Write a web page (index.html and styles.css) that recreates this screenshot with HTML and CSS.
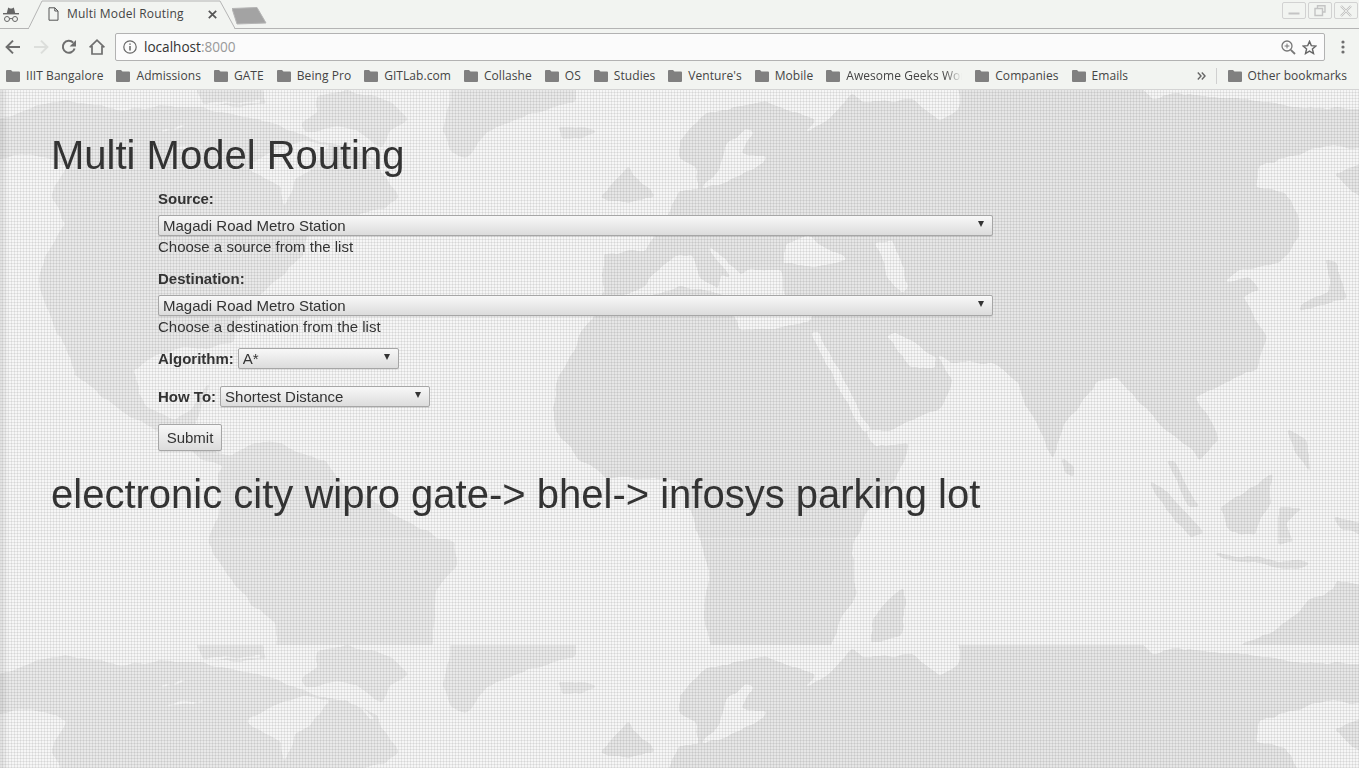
FILE: index.html
```html
<!DOCTYPE html>
<html lang="en">
<head>
<meta charset="UTF-8" />
<title>Multi Model Routing</title>
<link rel="stylesheet" href="styles.css">
</head>
<body>
  <header class="chrome">
    <div class="tabstrip">
      <svg class="incognito" width="16" height="18" viewBox="0 0 16 18">
        <path d="M3.8 8 L5.2 2.5 L7 3.4 L9 3.4 L10.8 2.5 L12.2 8 Z" fill="#666"/>
        <rect x="0" y="8" width="16" height="1.4" fill="#666"/>
        <circle cx="4" cy="14" r="2.5" fill="none" stroke="#666" stroke-width="1"/>
        <circle cx="12" cy="14" r="2.5" fill="none" stroke="#666" stroke-width="1"/>
        <path d="M6.5 13.6 H9.5" stroke="#666" stroke-width="1"/>
      </svg>
      <div class="tab">
        <svg class="tab-shape" width="210" height="29" viewBox="0 0 210 29">
          <path d="M0 28.5 H0.5 L14 1 H192 L207 28.5 H210" fill="#f2f4f1" stroke="#b4b4b4" stroke-width="1"/>
          <path d="M1 28.5 H206" stroke="#f2f4f1" stroke-width="2"/>
        </svg>
        <svg class="tab-file" width="11" height="14" viewBox="0 0 11 14">
          <path d="M1 .8 H6.8 L10 4 V13.2 H1 Z M6.8 .8 V4 H10" fill="none" stroke="#555" stroke-width="1"/>
        </svg>
        <span class="tab-title">Multi Model Routing</span>
        <svg class="tab-close" width="9" height="9" viewBox="0 0 9 9">
          <path d="M.8 .8 L8.2 8.2 M8.2 .8 L.8 8.2" stroke="#555" stroke-width="1.7"/>
        </svg>
      </div>
      <svg class="newtab" width="35" height="18" viewBox="0 0 35 18">
        <path d="M0 1.5 L25 .5 L34 16 L5 17 Z" fill="#a3a3a3" stroke="#b5b5b5" stroke-linejoin="round"/>
      </svg>
      <div class="win-buttons">
        <span class="win-btn">
          <svg width="12" height="12" viewBox="0 0 12 12"><path d="M.5 8.5 H11.5" stroke="#c4c4c4" stroke-width="2"/></svg>
        </span>
        <span class="win-btn">
          <svg width="12" height="12" viewBox="0 0 12 12"><path d="M3.5 3 V.8 H11 V7 H8.5 M1 3.5 H8.5 V10.5 H1 Z" fill="none" stroke="#c4c4c4" stroke-width="1.4"/></svg>
        </span>
        <span class="win-btn">
          <svg width="12" height="12" viewBox="0 0 12 12"><path d="M1 1 L11 11 M11 1 L1 11" stroke="#c4c4c4" stroke-width="2.4"/><path d="M1 1 L11 11 M11 1 L1 11" stroke="#f2f4f1" stroke-width=".8"/></svg>
        </span>
      </div>
    </div>

    <div class="toolbar">
      <svg class="nav-icon" width="16" height="16" viewBox="0 0 16 16"><path d="M15 8 H2 M8 1.6 L1.6 8 L8 14.4" fill="none" stroke="#6e6e6e" stroke-width="2"/></svg>
      <svg class="nav-icon" width="16" height="16" viewBox="0 0 16 16"><path d="M1 8 H14 M8 1.6 L14.4 8 L8 14.4" fill="none" stroke="#dcdedb" stroke-width="2"/></svg>
      <svg class="nav-icon" width="16" height="16" viewBox="0 0 16 16"><path d="M13.6 9.5 A6 6 0 1 1 12.2 3.6" fill="none" stroke="#6e6e6e" stroke-width="2"/><path d="M15 1 V7.4 H8.6 Z" fill="#6e6e6e"/></svg>
      <svg class="nav-icon nav-home" width="16" height="16" viewBox="0 0 16 16"><path d="M.6 8.4 L8 1.2 L15.4 8.4 M3 7 V15 H13 V7" fill="none" stroke="#6e6e6e" stroke-width="1.7"/></svg>
      <div class="omnibox">
        <svg class="info" width="14" height="14" viewBox="0 0 14 14">
          <circle cx="7" cy="7" r="6.2" fill="none" stroke="#666" stroke-width="1.2"/>
          <path d="M7 6 V10.6 M7 3.4 V4.8" stroke="#666" stroke-width="1.5"/>
        </svg>
        <span class="url">localhost<span class="url-port">:8000</span></span>
        <svg class="zoom-icon" width="15" height="15" viewBox="0 0 15 15">
          <circle cx="6" cy="6" r="5" fill="none" stroke="#777" stroke-width="1.3"/>
          <path d="M9.8 9.8 L14 14" stroke="#777" stroke-width="1.8"/>
          <path d="M3.6 6 H8.4 M6 3.6 V8.4" stroke="#777" stroke-width="1"/>
        </svg>
        <svg class="star" width="15" height="15" viewBox="0 0 15 15">
          <path d="M7.5 1.4 L9.3 5.6 L13.9 6 L10.4 9 L11.5 13.5 L7.5 11.1 L3.5 13.5 L4.6 9 L1.1 6 L5.7 5.6 Z" fill="none" stroke="#666" stroke-width="1.4"/>
        </svg>
      </div>
      <svg class="menu-dots" width="4" height="14" viewBox="0 0 4 14">
        <circle cx="2" cy="2" r="1.6" fill="#6e6e6e"/>
        <circle cx="2" cy="7" r="1.6" fill="#6e6e6e"/>
        <circle cx="2" cy="12" r="1.6" fill="#6e6e6e"/>
      </svg>
    </div>

    <nav class="bookmarks">
      <svg class="icon-defs" width="0" height="0">
        <symbol id="folder" viewBox="0 0 14 12">
          <path d="M0 1 Q0 0 1 0 H5 L6.5 1.6 H13 Q14 1.6 14 2.6 V11 Q14 12 13 12 H1 Q0 12 0 11 Z" fill="#808080"/>
        </symbol>
      </svg>
      <a class="bookmark"><svg class="folder"><use href="#folder"/></svg>IIIT Bangalore</a>
      <a class="bookmark"><svg class="folder"><use href="#folder"/></svg>Admissions</a>
      <a class="bookmark"><svg class="folder"><use href="#folder"/></svg>GATE</a>
      <a class="bookmark"><svg class="folder"><use href="#folder"/></svg>Being Pro</a>
      <a class="bookmark"><svg class="folder"><use href="#folder"/></svg>GITLab.com</a>
      <a class="bookmark"><svg class="folder"><use href="#folder"/></svg>Collashe</a>
      <a class="bookmark"><svg class="folder"><use href="#folder"/></svg>OS</a>
      <a class="bookmark"><svg class="folder"><use href="#folder"/></svg>Studies</a>
      <a class="bookmark"><svg class="folder"><use href="#folder"/></svg>Venture's</a>
      <a class="bookmark"><svg class="folder"><use href="#folder"/></svg>Mobile</a>
      <a class="bookmark"><svg class="folder"><use href="#folder"/></svg><span class="fade">Awesome Geeks World</span></a>
      <a class="bookmark"><svg class="folder"><use href="#folder"/></svg>Companies</a>
      <a class="bookmark"><svg class="folder"><use href="#folder"/></svg>Emails</a>
      <svg class="more" width="9" height="8" viewBox="0 0 9 8">
        <path d="M.8 .6 L4 4 L.8 7.4 M4.8 .6 L8 4 L4.8 7.4" fill="none" stroke="#666" stroke-width="1.4"/>
      </svg>
      <span class="bm-sep"></span>
      <a class="bookmark"><svg class="folder"><use href="#folder"/></svg>Other bookmarks</a>
    </nav>
  </header>

  <div class="viewport">
    <svg class="map" width="1359" height="678" viewBox="0 0 1359 678">
      <defs>
        <pattern id="weave" width="3" height="3" patternUnits="userSpaceOnUse">
          <rect x="2" width="1" height="3" fill="#000" opacity=".065"/>
          <rect y="2" width="3" height="1" fill="#000" opacity=".065"/>
        </pattern>
        <linearGradient id="edge" x1="0" x2="1" y1="0" y2="0">
          <stop offset="0" stop-color="#000" stop-opacity=".09"/>
          <stop offset="1" stop-color="#000" stop-opacity="0"/>
        </linearGradient>
        <!-- roughens the hand traced outlines into something like a coast -->
        <filter id="coast" filterUnits="userSpaceOnUse" x="-20" y="-40" width="1400" height="660">
          <feTurbulence type="fractalNoise" baseFrequency=".045" numOctaves="3" seed="4" result="noise"/>
          <feDisplacementMap in="SourceGraphic" in2="noise" scale="7" xChannelSelector="R" yChannelSelector="G"/>
          <feGaussianBlur stdDeviation="1.4"/>
          <feComponentTransfer>
            <feFuncA type="linear" slope="7" intercept="-3"/>
          </feComponentTransfer>
        </filter>
        <clipPath id="tile-clip">
          <rect width="1359" height="555"/>
        </clipPath>
        <g id="tile" clip-path="url(#tile-clip)">
          <g class="land land-west" filter="url(#coast)">
            <!-- Americas and the north atlantic islands -->
            <g transform="scale(.4337 .3333)">
              <path d="M-40 105 L20 80 L80 50 L150 30 L220 45 L290 62 L370 45 L470 55 L560 80 L650 110 L720 150 L800 165 L870 215 L900 290 L918 320 L890 350 L800 385 L710 430 L695 500 L660 540 L620 590 L575 650 L545 700 L540 760 L480 770 L400 780 L350 800 L310 840 L320 900 L340 950 L400 990 L440 960 L470 900 L490 870 L470 930 L450 1000 L500 1090 L530 1100 L560 1080 L520 1130 L470 1110 L400 1040 L300 985 L220 900 L170 850 L120 700 L85 570 L110 490 L150 400 L120 320 L140 260 L150 230 L130 215 L70 190 L-40 215 Z"/>
              <path d="M440 -40 L600 -40 L610 40 L540 50 L470 45 Z"/>
              <path d="M730 20 L800 5 L900 30 L945 95 L900 120 L880 170 L820 120 L760 110 L700 130 L690 100 L730 70 Z"/>
              <path d="M1022 120 L1045 -40 L1330 -40 L1325 40 L1260 55 L1180 90 L1120 130 L1075 205 L1040 185 Z"/>
              <path d="M1285 115 L1340 105 L1380 120 L1340 150 L1295 140 Z"/>
            </g>
            <g transform="translate(0 340) scale(.4337 .3333)">
              <path d="M550 60 L620 30 L750 90 L780 150 L940 280 L1050 340 L1055 400 L1005 480 L1000 620 L990 705 L640 705 L635 580 L540 470 L500 380 L480 330 L510 230 L500 130 Z"/>
            </g>
          </g>
          <g class="land" filter="url(#coast)">
            <!-- Europe, Asia and Africa -->
            <path transform="scale(.4337 .3333)" d="M1385 320 L1420 270 L1450 220 L1480 280 L1510 320 L1450 340 Z"/>
            <path d="M603 163 L645 160 L665 130 L680 100 L700 100 L695 77 L680 70 L680 50 L706 23 L767 12 L815 30 L800 45 L835 25 L853 2 L862 13 L910 10 L940 30 L958 20 L958 -20 L1130 -20 L1152 10 L1178 3 L1256 12 L1304 17 L1380 20 L1380 60 L1335 57 L1310 60 L1260 75 L1256 97 L1286 103 L1300 123 L1300 147 L1278 173 L1240 180 L1225 192 L1250 187 L1262 200 L1243 207 L1267 247 L1256 280 L1208 300 L1195 307 L1215 337 L1217 347 L1200 370 L1191 360 L1165 340 L1117 287 L1096 293 L1065 333 L1052 370 L1039 340 L1026 317 L1018 293 L992 273 L953 273 L935 263 L953 290 L940 317 L888 340 L866 340 L875 357 L909 353 L896 390 L866 423 L858 443 L851 452 L853 483 L855 507 L836 537 L825 580 L715 580 L704 523 L710 480 L699 447 L693 427 L680 390 L607 387 L577 367 L555 340 L555 300 L559 287 L577 250 L600 217 L603 200 Z"/>
            <path d="M1334 83 L1380 67 L1380 107 L1359 107 Z"/>
            <path d="M1165 370 L1175 372 L1200 417 L1190 417 Z"/>
            <path d="M903 497 L907 510 L901 547 L870 553 L873 527 L888 510 Z"/>
            <path d="M1061 365 L1074 377 L1072 388 L1065 383 Z"/>
            <path d="M1148 390 L1169 403 L1204 443 L1191 447 L1165 420 Z"/>
            <path d="M1221 417 L1273 383 L1269 413 L1256 447 L1226 440 Z"/>
            <path d="M1204 462 L1247 467 L1312 473 L1295 480 L1243 473 Z"/>
            <path d="M1278 417 L1304 417 L1286 433 L1293 453 L1278 455 Z"/>
            <path d="M1286 340 L1308 350 L1310 383 L1295 360 Z"/>
            <path d="M1334 427 L1380 437 L1380 447 L1342 440 Z"/>
            <path d="M1243 553 L1278 540 L1308 510 L1330 500 L1338 490 L1380 500 L1380 580 L1230 580 Z"/>
            <path d="M1299 223 L1334 210 L1347 207 L1338 173 L1325 170 L1330 200 L1304 213 Z"/>
          </g>
          <g class="sea" filter="url(#coast)">
            <path transform="scale(.4337 .3333)" d="M570 225 L620 190 L700 155 L760 165 L710 240 L680 270 L655 355 L645 290 L590 250 Z"/>
            <path transform="scale(.4337 .3333)" d="M120 740 L135 730 L175 850 L160 850 Z"/>
            <!-- channels between the arctic islands -->
            <g class="channels" transform="scale(.4337 .3333)">
              <path d="M370 125 L430 105"/>
              <path d="M480 45 L600 35"/>
              <path d="M380 185 L470 165"/>
              <path d="M640 55 L720 5"/>
              <path d="M700 135 L780 115"/>
              <path d="M820 175 L860 225"/>
            </g>
            <path d="M600 212 L640 200 L660 178 L680 163 L693 165 L700 190 L720 198 L722 185 L735 187 L750 180 L782 180 L784 207 L819 207 L810 233 L788 237 L741 240 L723 203 L680 197 L624 213 Z"/>
            <path d="M706 153 L740 183 L735 190 L712 165 Z"/>
            <path d="M784 153 L806 147 L847 170 L814 177 L784 173 Z"/>
            <path d="M875 153 L892 150 L909 197 L901 203 L888 187 Z"/>
            <path d="M810 243 L819 243 L870 340 L862 340 Z"/>
            <path d="M888 245 L897 243 L935 267 L935 277 L910 277 Z"/>
            <path d="M723 67 L728 53 L745 40 L754 42 L741 63 L767 68 L754 80 L736 87 L710 97 L702 100 L718 80 Z"/>
            <path d="M680 75 L695 80 L700 97 L680 100 Z"/>
          </g>
        </g>
      </defs>
      <rect class="sea" width="1359" height="678"/>
      <use href="#tile"/>
      <use href="#tile" y="555"/>
      <rect y="448" width="1359" height="1" fill="#fff" opacity=".35"/>
      <rect width="1359" height="678" fill="url(#weave)"/>
      <rect width="9" height="678" fill="url(#edge)"/>
    </svg>

    <main class="page">
      <h1>Multi Model Routing</h1>
      <form class="route-form">
        <div class="form-group">
          <label for="source">Source:</label>
          <div class="select-wrap">
            <select id="source" class="select-full"><option>Magadi Road Metro Station</option></select>
          </div>
          <div class="help">Choose a source from the list</div>
        </div>
        <div class="form-group">
          <label for="destination">Destination:</label>
          <div class="select-wrap">
            <select id="destination" class="select-full"><option>Magadi Road Metro Station</option></select>
          </div>
          <div class="help">Choose a destination from the list</div>
        </div>
        <div class="form-row">
          <label for="algorithm">Algorithm:</label>
          <div class="select-wrap">
            <select id="algorithm" class="select-algo"><option>A*</option></select>
          </div>
        </div>
        <div class="form-row">
          <label for="howto">How To:</label>
          <div class="select-wrap">
            <select id="howto" class="select-howto"><option>Shortest Distance</option></select>
          </div>
        </div>
        <button type="button" class="btn-submit">Submit</button>
      </form>
      <h1 class="result">electronic city wipro gate-&gt; bhel-&gt; infosys parking lot</h1>
    </main>
  </div>
</body>
</html>
```

FILE: styles.css
```css
* {
  box-sizing: border-box;
}

html, body {
  height: 768px;
  overflow: hidden;
}

body {
  margin: 0;
  font-family: "Liberation Sans", Arial, sans-serif;
  font-size: 15px;
  line-height: 22px;
  color: #333;
  background: #f1f1f1;
}

/* Browser chrome */
.chrome {
  height: 90px;
  background: #f2f4f1;
  border-bottom: 1px solid #d4d4d4;
  font-family: "Open Sans", sans-serif;
  color: #444;
}

.tabstrip {
  height: 29px;
  display: flex;
  align-items: flex-start;
  border-bottom: 1px solid #b4b4b4;
  padding-left: 3px;
}

.incognito {
  margin-top: 5px;
  flex: none;
}

.tab {
  position: relative;
  width: 210px;
  height: 29px;
  margin-left: 9px;
  flex: none;
  display: flex;
  align-items: center;
  padding: 0 0 1px 20px;
}

.tab-shape {
  position: absolute;
  left: 0;
  top: 0;
}

.tab-file, .tab-title, .tab-close {
  position: relative;
}

.tab-title {
  margin-left: 8px;
  font-size: 12px;
  letter-spacing: .2px;
  white-space: nowrap;
}

.tab-close {
  margin-left: 24px;
}

.newtab {
  margin: 7px 0 0 -6px;
  flex: none;
}

.win-buttons {
  margin: 2px 1px 0 auto;
  display: flex;
  gap: 2px;
}

.win-btn {
  width: 24px;
  height: 17px;
  border: 1px solid #d2d2d2;
  border-radius: 2px;
  display: flex;
  align-items: center;
  justify-content: center;
}

.toolbar {
  height: 33px;
  display: flex;
  align-items: center;
  padding: 3px 0 0 5px;
}

.nav-icon {
  flex: none;
  margin-right: 12px;
}

.nav-home {
  margin-right: 10px;
}

.omnibox {
  width: 1210px;
  height: 28px;
  flex: none;
  display: flex;
  align-items: center;
  padding: 0 7px;
  background: #fbfbfb;
  border: 1px solid #b2b2b2;
  border-radius: 2px;
}

.url {
  margin-left: 7px;
  font-size: 13.6px;
  color: #333;
}

.url-port {
  color: #999;
}

.zoom-icon {
  margin-left: auto;
}

.star {
  margin-left: 6px;
}

.menu-dots {
  margin-left: 16px;
  flex: none;
}

.bookmarks {
  height: 27px;
  display: flex;
  align-items: center;
  gap: 13px;
  padding: 0 12px 0 6px;
  font-size: 12px;
  letter-spacing: .06px;
  white-space: nowrap;
}

.icon-defs {
  position: absolute;
}

.bookmark {
  display: flex;
  align-items: center;
  gap: 6px;
}

.folder {
  width: 14px;
  height: 12px;
  flex: none;
}

.fade {
  display: block;
  width: 116px;
  overflow: hidden;
  -webkit-mask-image: linear-gradient(to right, #000 85%, transparent);
  mask-image: linear-gradient(to right, #000 85%, transparent);
}

.more {
  margin-left: auto;
}

.bm-sep {
  width: 1px;
  height: 16px;
  margin: 0 -2px 0 -3px;
  background: #d0d0d0;
}

/* Page */
.viewport {
  position: relative;
  height: 678px;
  overflow: hidden;
}

.map {
  position: absolute;
  left: 0;
  top: 0;
  display: block;
}

.land {
  fill: #e6e6e6;
}

.land-west {
  fill: #e9e9e9;
}

.sea {
  fill: #f6f6f6;
}

.channels path {
  fill: none;
  stroke: #f6f6f6;
  stroke-width: 7px;
}

.page {
  position: relative;
  padding: 43px 0 0 51px;
}

h1 {
  margin: 0;
  font-size: 40px;
  font-weight: 400;
  line-height: 44px;
}

.route-form {
  margin: 11px 0 0 107px;
}

.form-group {
  margin-bottom: 10px;
}

label {
  display: block;
  font-weight: 700;
}

.select-wrap {
  position: relative;
  width: max-content;
}

.select-wrap::after {
  content: "";
  position: absolute;
  right: 9px;
  top: 6px;
  border-top: 6px solid #333;
  border-left: 3.5px solid transparent;
  border-right: 3.5px solid transparent;
  pointer-events: none;
}

select, .btn-submit {
  font: inherit;
  color: #333;
  border: 1px solid #a6a6a6;
  border-radius: 2px;
  background: linear-gradient(#f8f8f8, #dcdcdc);
  box-shadow: 0 1px 0 rgba(0, 0, 0, .08);
}

select {
  display: block;
  height: 21px;
  padding: 0 0 0 4px;
  appearance: none;
  -webkit-appearance: none;
  line-height: 19px;
}

.form-group select {
  margin-top: 5px;
}

.select-full {
  width: 835px;
}

.select-algo {
  width: 161px;
}

.select-howto {
  width: 210px;
}

.form-row {
  display: flex;
  align-items: center;
  gap: 4px;
  height: 21px;
  margin-bottom: 17px;
}

.btn-submit {
  display: block;
  width: 64px;
  height: 27px;
  padding: 0;
}

.result {
  margin-top: 21px;
}
```
